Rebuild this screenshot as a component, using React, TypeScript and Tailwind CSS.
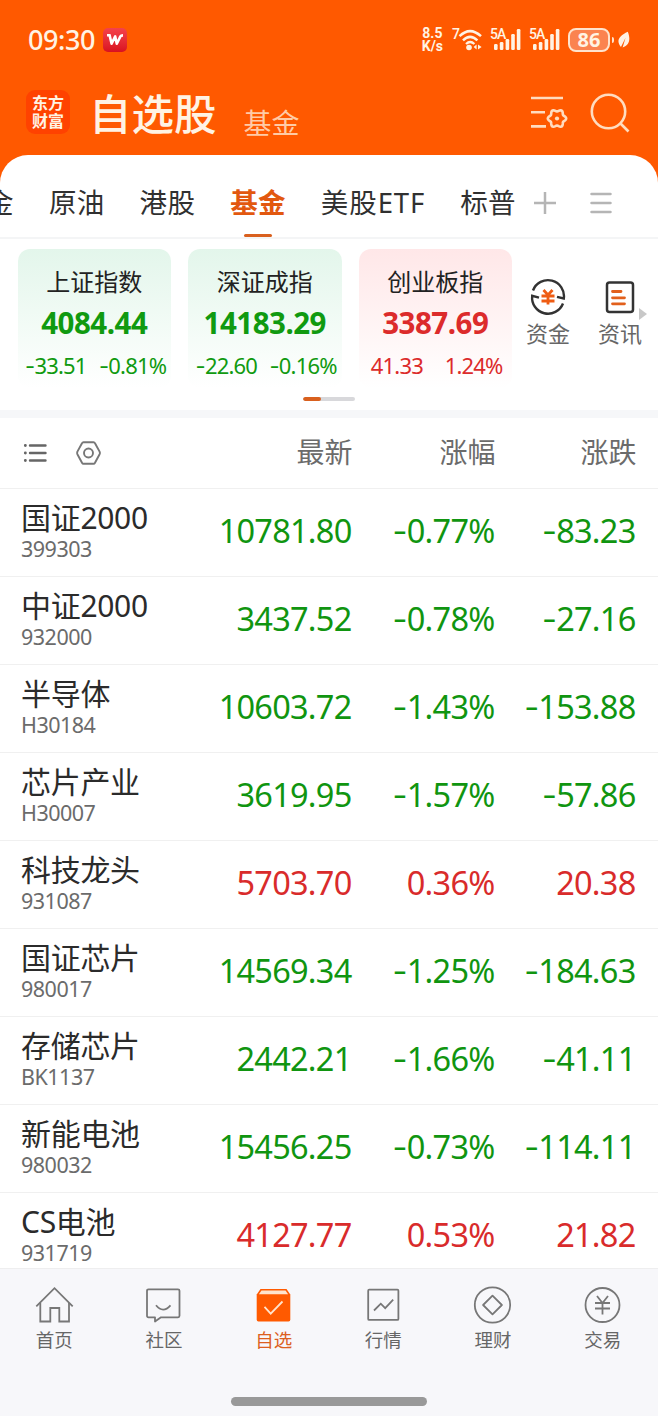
import { memo, type ReactNode } from 'react';
import clsx from 'clsx';

interface IndexCard {
  name: string;
  value: string;
  change: string;
  percent: string;
}

interface Quote {
  name: string;
  code: string;
  price: string;
  percent: string;
  change: string;
}

const INDEX_CARDS: IndexCard[] = [
  { name: '上证指数', value: '4084.44', change: '-33.51', percent: '-0.81%' },
  { name: '深证成指', value: '14183.29', change: '-22.60', percent: '-0.16%' },
  { name: '创业板指', value: '3387.69', change: '41.33', percent: '1.24%' },
];

const QUOTES: Quote[] = [
  { name: '国证2000', code: '399303', price: '10781.80', percent: '-0.77%', change: '-83.23' },
  { name: '中证2000', code: '932000', price: '3437.52', percent: '-0.78%', change: '-27.16' },
  { name: '半导体', code: 'H30184', price: '10603.72', percent: '-1.43%', change: '-153.88' },
  { name: '芯片产业', code: 'H30007', price: '3619.95', percent: '-1.57%', change: '-57.86' },
  { name: '科技龙头', code: '931087', price: '5703.70', percent: '0.36%', change: '20.38' },
  { name: '国证芯片', code: '980017', price: '14569.34', percent: '-1.25%', change: '-184.63' },
  { name: '存储芯片', code: 'BK1137', price: '2442.21', percent: '-1.66%', change: '-41.11' },
  { name: '新能电池', code: '980032', price: '15456.25', percent: '-0.73%', change: '-114.11' },
  { name: 'CS电池', code: '931719', price: '4127.77', percent: '0.53%', change: '21.82' },
];

const TABS = ['金', '原油', '港股', '基金', '美股ETF', '标普'];
const ACTIVE_TAB = '基金';

// Six-lobed outline for the settings icon, centred on (27, 23.5)
const GEAR_POINTS = Array.from({ length: 60 }, (_, i) => {
  const angle = (i * Math.PI) / 30;
  const radius = 8.1 + 1.1 * Math.cos(6 * angle);
  return `${(27 + radius * Math.cos(angle)).toFixed(2)},${(23.5 + radius * Math.sin(angle)).toFixed(2)}`;
}).join(' ');

const isDown = (value: string) => value.startsWith('-');

// Figures are tracked tight; the sign comes from a face with a wider hyphen
function Figure({ value }: { value: string }) {
  return (
    <span className="whitespace-nowrap">
      {isDown(value) && <span className="font-['Inter',sans-serif]">-</span>}
      {value.replace('-', '')}
    </span>
  );
}

function SignalBars() {
  return (
    <span className="flex items-start">
      <span className="w-[16px] font-['Roboto',sans-serif] text-[14px] leading-[13px] font-medium tracking-[-1px]">5A</span>
      <svg width="27" height="24" viewBox="0 0 27 24" className="-ml-[12px]" fill="currentColor">
        <rect x="0" y="16" width="3.6" height="6" rx="1.2" />
        <rect x="5.8" y="14" width="3.6" height="8" rx="1.2" />
        <rect x="11.6" y="11" width="3.6" height="11" rx="1.2" />
        <rect x="17.2" y="6" width="3.6" height="16" rx="1.2" />
        <rect x="22.8" y="1" width="3.6" height="21" rx="1.2" />
      </svg>
    </span>
  );
}

function StatusBar() {
  return (
    <div className="flex h-20 items-center pl-7 pr-[28px] text-[#fff3e4]">
      <span className="text-[27px] font-medium leading-8 tracking-[-0.4px]">09:30</span>
      <span className="ml-2 flex h-6 w-6 items-center justify-center rounded-[5px] bg-gradient-to-b from-[#f5414b] to-[#d90f20]">
        <svg width="18" height="12" viewBox="0 0 18 12" fill="none" stroke="white" strokeWidth="2.6" strokeLinejoin="round">
          <path d="M1 1.2h2.6l2 8.6L9.2 2.4l1.6 7.4 3.6-7.4q.5-1 2.6-1" />
        </svg>
      </span>
      <div className="ml-auto flex items-center">
        <span className="flex flex-col text-center font-['Roboto',sans-serif] text-[14px] font-bold leading-[13px]">
          <span>8.5</span>
          <span>K/s</span>
        </span>
        <span className="ml-[9px] flex h-6 items-start">
          <span className="font-['Roboto',sans-serif] text-[14px] font-medium leading-[13px]">7</span>
          <svg width="25" height="24" viewBox="0 0 25 24" className="-ml-[2px]" fill="none" stroke="currentColor" strokeWidth="2.5">
            <path d="M1.5 8.2Q12 -2 23 8.2" />
            <path d="M5 12.3q7-6.8 14.4 0" />
            <path d="M8 16q4.2-4 8.4 0" strokeWidth="2.2" />
            <circle cx="11" cy="19.5" r="2.8" fill="currentColor" stroke="none" />
            <path d="M18.6 16.5v5L15.6 19zM20 16.5v5L23.6 19z" fill="currentColor" stroke="none" />
          </svg>
        </span>
        <span className="ml-[7px]"><SignalBars /></span>
        <span className="ml-[8px]"><SignalBars /></span>
        <span className="ml-[8px] flex h-6 w-[42px] items-center justify-center rounded-[8px] border-2 border-[#ffe3cc] bg-[#fb8350] text-[20px] font-bold leading-5">
          86
        </span>
        <span className="ml-[2px] h-1.5 w-[2px] rounded-r bg-[#ffe3cc]" />
        <svg width="12" height="18" viewBox="0 0 13 18" className="ml-[4px]" fill="currentColor">
          <path d="M10.6 0C13.6 7 13 14.8 5 17L8.2 6.500 3.200 16.600C-2.400 10 1 4.400 10.600 0z" />
        </svg>
      </div>
    </div>
  );
}

function TitleBar() {
  return (
    <div className="flex h-[75px] items-center pl-[26px] pr-[28px] pb-[11px] text-[#fff3e4]">
      <div className="flex h-11 w-11 flex-col items-center justify-center rounded-[9px] bg-[#ff4200] pb-[2px] font-['Noto_Sans_CJK_SC',sans-serif] text-[16px] font-bold leading-[18px]">
        <span>东方</span>
        <span>财富</span>
      </div>
      <h1 className="ml-[19px] font-['Noto_Sans_CJK_SC',sans-serif] text-[42.5px] font-medium leading-[50px]">自选股</h1>
      <span className="ml-[27px] mt-[19px] font-['Noto_Sans_CJK_SC',sans-serif] text-[28px] leading-8 text-[#ffcba6]">基金</span>
      <svg width="38" height="36" viewBox="0 0 38 36" className="ml-auto mt-[1px]" fill="none" stroke="#ffdcbf" strokeWidth="2.6">
        <path d="M1 3h32M1 17.300h14M1 31.400h15" />
        <polygon points={GEAR_POINTS} strokeLinejoin="round" />
        <circle cx="27" cy="23.500" r="2.100" fill="#ffdcbf" stroke="none" />
      </svg>
      <svg width="40" height="40" viewBox="0 0 40 40" className="ml-[22px] mt-[1px]" fill="none" stroke="#ffdcbf" strokeWidth="2.6">
        <circle cx="18.500" cy="18.500" r="16.700" />
        <path d="M30 30l8.500 8.500" />
      </svg>
    </div>
  );
}

function TabStrip() {
  return (
    <nav className="flex h-[84px] shrink-0 items-end border-b-2 border-[#f4f5f6] font-['Noto_Sans','Noto_Sans_CJK_SC',sans-serif] text-[27.5px] leading-10 text-[#303030]">
      <div className="-ml-[14px] flex gap-[35px]">
        {TABS.map(tab => (
          <div
            key={tab}
            className={clsx('flex flex-col items-center whitespace-nowrap', tab === ACTIVE_TAB && 'font-bold text-[#e2580f]')}
          >
            <span className={clsx(tab.endsWith('ETF') ? 'tracking-[0.9px]' : 'tracking-[0.3px]')}>{tab}</span>
            <span className={clsx('mt-[11px] h-[3px] w-7 rounded-full', tab === ACTIVE_TAB && 'bg-[#d9601e]')} />
          </div>
        ))}
      </div>
      <svg width="24" height="24" viewBox="0 0 24 24" className="mb-[22px] ml-[17px]" fill="none" stroke="#b5b5b5" strokeWidth="2.5">
        <path d="M12 1v22M1 12h22" />
      </svg>
      <svg width="24" height="24" viewBox="0 0 24 24" className="mb-[22px] ml-8" fill="none" stroke="#b5b5b5" strokeWidth="2.5" strokeLinecap="round">
        <path d="M2.500 3h19M2.500 12h19M2.500 21h19" />
      </svg>
    </nav>
  );
}

const IndexTile = memo(function IndexTile({ card }: { card: IndexCard }) {
  const down = isDown(card.change);
  return (
    <div
      className={clsx(
        'flex h-[139px] w-[153.5px] flex-col items-center rounded-[12px] bg-gradient-to-b pt-[16px]',
        down ? 'from-[#e3f6eb] to-white text-[#109a10]' : 'from-[#ffe7e8] to-white text-[#dc2b2b]'
      )}
    >
      <span className="font-['Noto_Sans_CJK_SC',sans-serif] text-[24px] leading-[32px] text-[#222]">{card.name}</span>
      <span className="mt-[6px] text-[29.5px] font-bold leading-10 tracking-[-0.5px]">{card.value}</span>
      <div className="mt-[7px] grid w-full grid-cols-2 text-center text-[22px] leading-[30px] tracking-[-0.8px]">
        <Figure value={card.change} />
        <Figure value={card.percent} />
      </div>
    </div>
  );
});

function Shortcut({ label, children }: { label: string; children: ReactNode }) {
  return (
    <div className="flex w-[46px] flex-col items-center pt-[29px]">
      {children}
      <span className="whitespace-nowrap font-['Noto_Sans_CJK_SC',sans-serif] text-[22px] leading-8 text-[#666]">{label}</span>
    </div>
  );
}

function IndexPanel() {
  return (
    <section className="flex h-[171px] shrink-0 flex-col items-center pt-[10px]">
      <div className="flex w-full pl-[17.5px]">
        <div className="flex gap-[17px]">
          {INDEX_CARDS.map(card => (
            <IndexTile key={card.name} card={card} />
          ))}
        </div>
        <div className="ml-[13px] flex gap-[26px]">
          <Shortcut label="资金">
            <svg width="38" height="38" viewBox="0 0 38 38" fill="none" stroke="#333" strokeWidth="2.4">
              <path d="M4 12.500A16 16 0 0 1 34.800 20.500L28 18.800" />
              <path d="M34 25.500A16 16 0 0 1 3.200 17.800L10 19.700" />
              <g stroke="#ef5c13" strokeWidth="2.8">
                <path d="M14.500 12l4.500 5 4.500-5M12.500 18h13M12.500 23h13M19 17v9.500" />
              </g>
            </svg>
          </Shortcut>
          <Shortcut label="资讯">
            <svg width="38" height="38" viewBox="0 0 38 38" fill="none" strokeWidth="2.5">
              <rect x="6" y="4.500" width="26" height="29.500" rx="2.500" stroke="#333" />
              <path d="M11.500 13.500h8.500M11.500 19.800h12M11.500 25.800h12" stroke="#e2601c" strokeWidth="2.800" strokeLinecap="round" />
            </svg>
          </Shortcut>
        </div>
        <svg width="8" height="12" viewBox="0 0 8 12" className="-ml-[4px] mt-[59px]">
          <path d="M0 0l8 6-8 6z" fill="#c8c8c8" />
        </svg>
      </div>
      <div className="mt-[9px] h-[4px] w-[52px] overflow-hidden rounded-full bg-[#d8d8db]">
        <div className="h-full w-[18px] rounded-full bg-[#d9601e]" />
      </div>
    </section>
  );
}

function QuoteHeader() {
  return (
    <div className="grid h-[71px] shrink-0 grid-cols-[178.5px_152px_143px_141px] items-center border-b border-[#f0f0f0] pl-[22px] text-right font-['Noto_Sans_CJK_SC',sans-serif] text-[28px] leading-10 text-[#6b6b6b]">
      <div className="flex items-center gap-[28px]">
        <svg width="26" height="26" viewBox="0 0 26 26" fill="none" stroke="#666" strokeWidth="2.4" strokeLinecap="round">
          <path d="M8 5.500h15.500M8 13h15.500M8 20.500h15.500" />
          <path d="M3.300 5.500h.1M3.300 13h.1M3.300 20.500h.1" strokeWidth="2.8" />
        </svg>
        <svg width="26" height="26" viewBox="0 0 26 26" fill="none" stroke="#777" strokeWidth="1.9" strokeLinejoin="round">
          <path d="M7.500 2.200h10q1 0 1.500 1l4.600 8.400q.6 1.400 0 2.600L19 22.800q-.5 1-1.500 1h-10q-1 0-1.500-1L1.400 14.200q-.5-1.200 0-2.600L6 3.200q.5-1 1.500-1z" />
          <circle cx="12.500" cy="13" r="4.500" />
        </svg>
      </div>
      <span className="-mt-[4px]">最新</span>
      <span className="-mt-[4px]">涨幅</span>
      <span className="-mt-[4px]">涨跌</span>
    </div>
  );
}

const QuoteRow = memo(function QuoteRow({ quote }: { quote: Quote }) {
  return (
    <div
      className={clsx(
        'grid h-[88px] shrink-0 grid-cols-[179px_151.5px_143px_141px] items-center border-b border-[#f0f0f0] pb-[3px] pl-[21px] text-right text-[32.5px] leading-10 tracking-[-0.75px]',
        isDown(quote.change) ? 'text-[#109510]' : 'text-[#d92b2b]'
      )}
    >
      <div className="flex flex-col text-left">
        <span className="text-[30px] leading-9 tracking-[-0.3px] text-[#2b2b2b]">{quote.name}</span>
        <span className="text-[21.5px] leading-[26px] tracking-[-0.5px] text-[#6b6b6b]">{quote.code}</span>
      </div>
      <Figure value={quote.price} />
      <Figure value={quote.percent} />
      <Figure value={quote.change} />
    </div>
  );
});

const NAV_ITEMS: { label: string; active?: boolean; icon: ReactNode }[] = [
  {
    label: '首页',
    icon: (
      <>
        <path d="M1.800 21.300L20 3.200l18.200 18.100" />
        <path d="M5.800 18v18.500h10V23h9v13.500h9.700V18" />
      </>
    ),
  },
  {
    label: '社区',
    icon: (
      <>
        <path d="M5 4.300h29.500q1.500 0 1.500 1.500v25q0 1.500-1.500 1.500H17.500L11.500 36.500V32.300H5q-1.500 0-1.500-1.500v-25q0-1.500 1.500-1.500z" strokeLinejoin="round" />
        <path d="M12.500 20.300q7 8.500 14.500 0" />
      </>
    ),
  },
  {
    label: '自选',
    active: true,
    icon: (
      <>
        <path d="M7 4h26l3.800 5.500v25.300q0 1.700-1.700 1.700H4.900q-1.700 0-1.700-1.700V9.500z" fill="#ff5a00" stroke="none" />
        <path d="M8 5.500h24l2.600 3.800H5.400z" fill="#ffe3cc" stroke="none" />
        <path d="M11 21.800l6.200 6.800L29 16.500" stroke="#ffe3cc" />
      </>
    ),
  },
  {
    label: '行情',
    icon: (
      <>
        <rect x="4.700" y="4.700" width="30.200" height="30.200" rx="1" />
        <path d="M10.500 25.500l6.800-6.800 4.400 4.400 8-8.500" />
      </>
    ),
  },
  {
    label: '理财',
    icon: (
      <>
        <circle cx="20" cy="20" r="17.700" />
        <path d="M20 10.600l9.400 9.400-9.400 9.400-9.400-9.400z" strokeLinejoin="round" />
      </>
    ),
  },
  {
    label: '交易',
    icon: (
      <>
        <circle cx="20" cy="20" r="17" />
        <path d="M14.500 11l5.500 7 5.500-7M12.500 18h15M12.500 23.500h15M20 18v11.500" />
      </>
    ),
  },
];

function BottomNav() {
  return (
    <footer className="flex h-[148px] shrink-0 flex-col items-center border-t border-[#eeeeef] bg-[#f7f7fa]">
      <div className="grid w-full -translate-x-[0.5px] grid-cols-6">
        {NAV_ITEMS.map(item => (
          <div key={item.label} className="flex flex-col items-center pt-[16px]">
            <svg width="40" height="40" viewBox="0 0 40 40" fill="none" stroke="#777" strokeWidth="1.8">
              {item.icon}
            </svg>
            <span
              className={clsx(
                "font-['Noto_Sans_CJK_SC',sans-serif] text-[18.5px] leading-7",
                item.active ? 'text-[#dc601f]' : 'text-[#666]'
              )}
            >
              {item.label}
            </span>
          </div>
        ))}
      </div>
      <div className="mt-auto mb-[10px] h-[9px] w-[196px] rounded-full bg-[#999]" />
    </footer>
  );
}

export default function App() {
  return (
    <div className="flex h-[1416px] w-[658px] flex-col overflow-hidden bg-[#ff5900] font-['Noto_Sans','Noto_Sans_CJK_SC',sans-serif]">
      <header className="shrink-0">
        <StatusBar />
        <TitleBar />
      </header>
      <main className="flex min-h-0 flex-1 flex-col overflow-hidden rounded-t-[28px] bg-white">
        <TabStrip />
        <IndexPanel />
        <div className="h-2 shrink-0 bg-[#f6f7f9]" />
        <QuoteHeader />
        {QUOTES.map(quote => (
          <QuoteRow key={quote.code} quote={quote} />
        ))}
      </main>
      <BottomNav />
    </div>
  );
}
